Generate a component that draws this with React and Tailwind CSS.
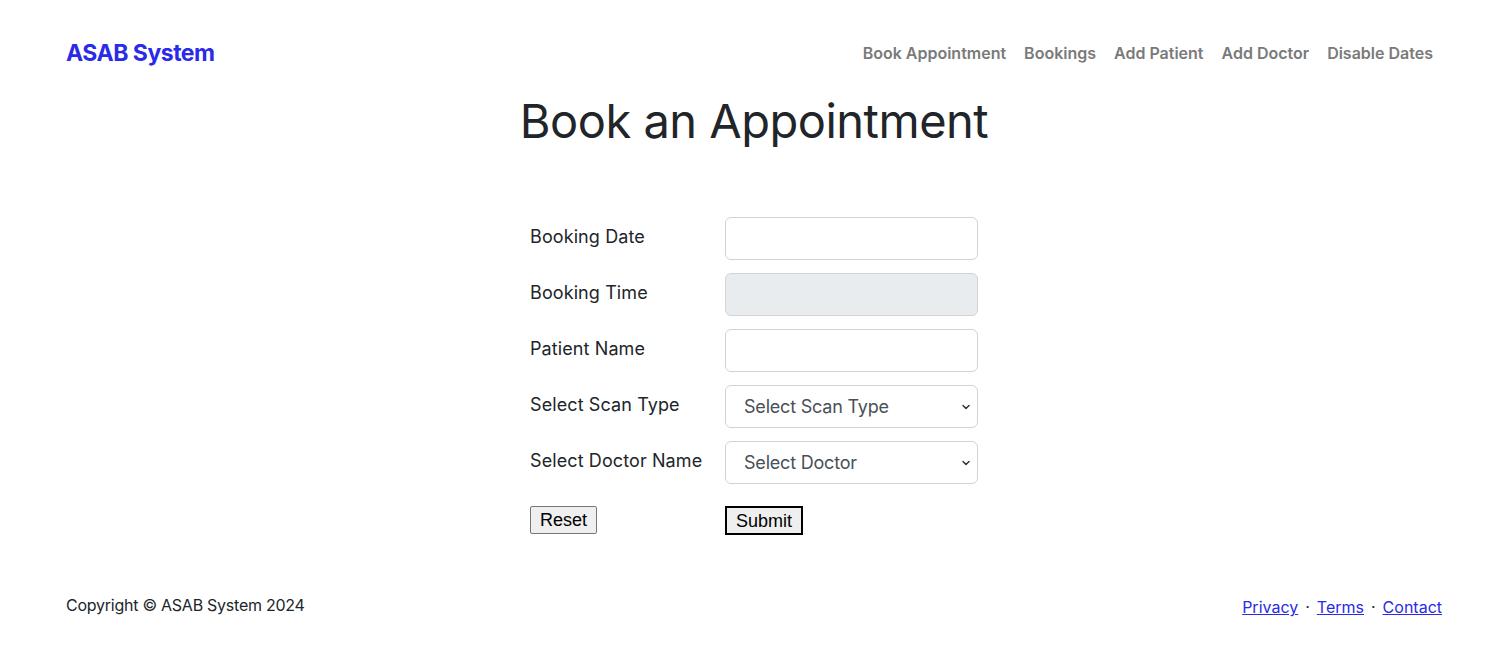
import { ChevronDown } from "lucide-react";

const font = { fontFamily: "Inter, 'Noto Sans', sans-serif" };
const btnFont = { fontFamily: "'Liberation Sans', Arial, sans-serif" };

const Field = ({ label, children }) => (
  <div className="flex items-start h-[56px]">
    <label className="w-[195px] pt-[6px] text-[18px] text-[#212529] tracking-[0.1px]">{label}</label>
    {children}
  </div>
);

const TextInput = ({ disabled }) => (
  <input
    disabled={disabled}
    className={
      "w-[253px] h-[43px] rounded-[6px] border border-[#ced4da] px-3 outline-none " +
      (disabled ? "bg-[#e9ecef]" : "bg-white")
    }
  />
);

const SelectBox = ({ text }) => (
  <div className="relative w-[253px] h-[43px] rounded-[6px] border border-[#ced4da] bg-white flex items-center pl-[18px]">
    <span className="text-[18px] text-[#495057] tracking-[-0.2px]">{text}</span>
    <ChevronDown className="absolute right-[5px] top-[15px] w-[12px] h-[12px] text-[#333]" strokeWidth={3} />
  </div>
);

export default function App() {
  return (
    <div className="w-full min-h-[651px] bg-white flex flex-col" style={font}>
      <nav className="flex items-center justify-between pl-[66px] pr-[53px] h-[106px]">
        <a className="text-[23px] font-bold text-[#2a2ae8] tracking-[-0.5px]">ASAB System</a>
        <ul className="flex items-center">
          {["Book Appointment", "Bookings", "Add Patient", "Add Doctor", "Disable Dates"].map((l) => (
            <li key={l} className="px-[9px] text-[16px] font-semibold text-[#7a7a7a] tracking-[0px]">
              {l}
            </li>
          ))}
        </ul>
      </nav>

      <main className="flex flex-col items-center pl-[13px]">
        <h1 className="text-[47px] leading-none text-[#212529] -mt-[9px] tracking-[-0.5px]">Book an Appointment</h1>
        <form className="mt-[73px] w-[448px] flex flex-col">
          <Field label="Booking Date"><TextInput /></Field>
          <Field label="Booking Time"><TextInput disabled /></Field>
          <Field label="Patient Name"><TextInput /></Field>
          <Field label="Select Scan Type"><SelectBox text="Select Scan Type" /></Field>
          <Field label="Select Doctor Name"><SelectBox text="Select Doctor" /></Field>
          <div className="flex items-start mt-[9px]">
            <div className="w-[195px]">
              <button
                type="button"
                className="h-[28px] px-[9px] bg-[#efefef] border border-[#767676] rounded-[2px] text-[18px] text-black"
                style={btnFont}
              >
                Reset
              </button>
            </div>
            <button
              type="button"
              className="h-[29px] px-[9px] bg-[#efefef] border-2 border-black text-[18px] text-black"
              style={btnFont}
            >
              Submit
            </button>
          </div>
        </form>
      </main>

      <footer className="flex items-center justify-between pl-[66px] pr-[53px] mt-[56px]">
        <div className="text-[16px] text-[#212529] tracking-[-0.25px]">Copyright © ASAB System 2024</div>
        <div className="text-[16px] flex items-center gap-[7px] mt-[4px]">
          <a className="text-[#2a2ae8] underline">Privacy</a>
          <span className="text-[#212529]">·</span>
          <a className="text-[#2a2ae8] underline">Terms</a>
          <span className="text-[#212529]">·</span>
          <a className="text-[#2a2ae8] underline">Contact</a>
        </div>
      </footer>
    </div>
  );
}
